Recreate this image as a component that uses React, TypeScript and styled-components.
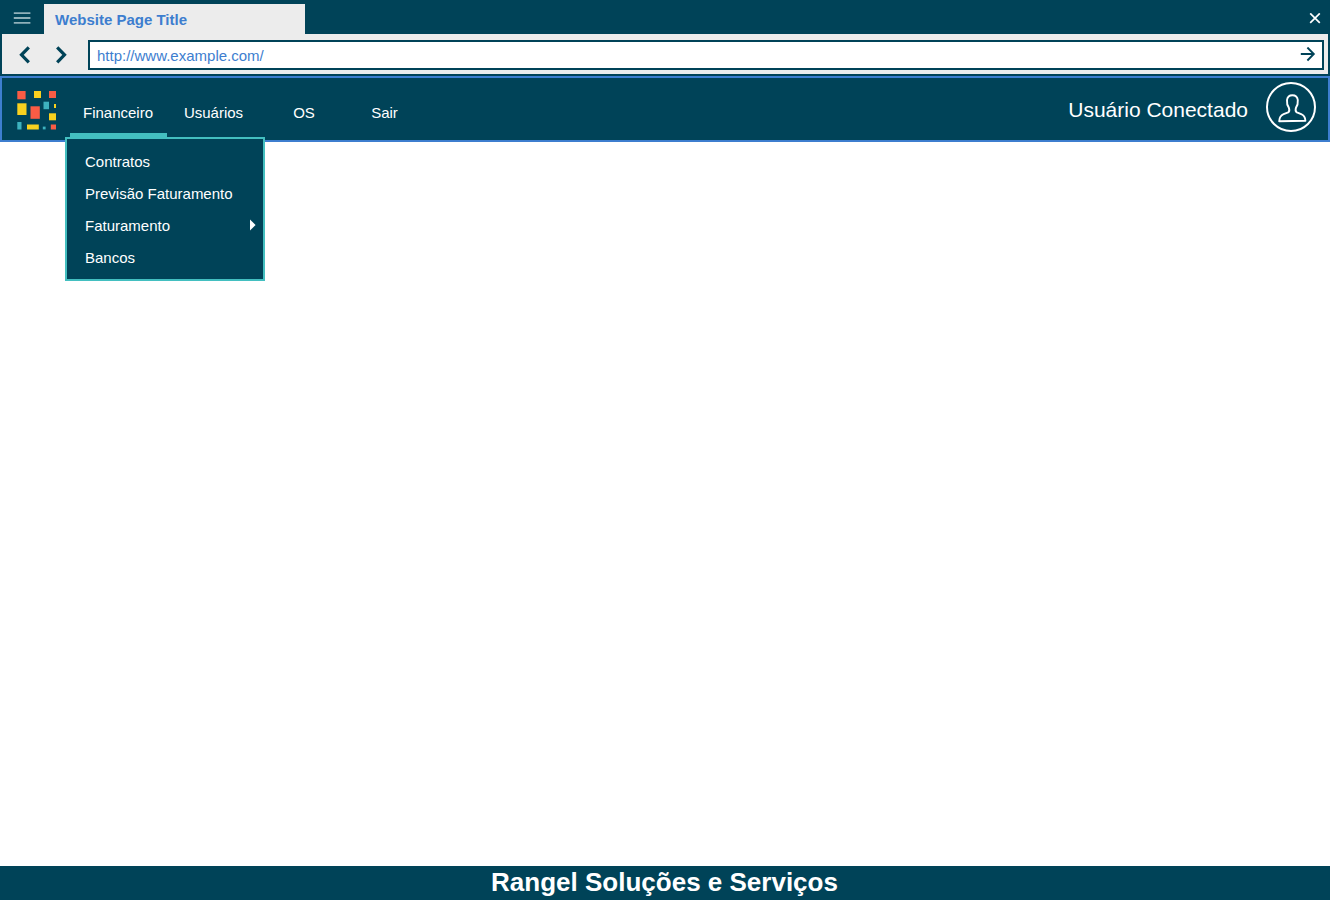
import React from "react";
import styled, { createGlobalStyle } from "styled-components";

const navy = "#004358";
const teal = "#43bfc0";
const blue = "#3d7ecf";
const chrome = "#ececec";

const GlobalStyle = createGlobalStyle`
  * { box-sizing: border-box; }
  body {
    margin: 0;
    background: #fff;
    font-family: "Liberation Sans", Arial, sans-serif;
    font-size: 15px;
  }
  button, input { font: inherit; }
`;

const Page = styled.div`
  display: flex;
  flex-direction: column;
  min-height: 100vh;
`;

const Browser = styled.div`
  background: ${navy};
  padding: 4px 2px 2px;
`;

const TabBar = styled.div`
  display: flex;
  align-items: stretch;
  height: 30px;
`;

const IconButton = styled.button<{ $width: number }>`
  display: flex;
  align-items: center;
  justify-content: center;
  flex: none;
  width: ${(p) => p.$width}px;
  padding: 0;
  border: 0;
  background: none;
  cursor: pointer;
`;

const BrowserTab = styled.div`
  width: 261px;
  margin-left: 2px;
  padding-left: 11px;
  background: ${chrome};
  color: ${blue};
  font-weight: bold;
  line-height: 32px;
`;

const Spacer = styled.div`
  flex: 1;
`;

const Toolbar = styled.div`
  display: flex;
  align-items: stretch;
  height: 40px;
  padding: 6px 4px 4px 5px;
  background: ${chrome};
`;

const AddressBox = styled.form`
  display: flex;
  flex: 1;
  min-width: 0;
  margin-left: 9px;
  border: 2px solid ${navy};
  background: #fff;
`;

const AddressInput = styled.input`
  flex: 1;
  min-width: 0;
  padding: 0 7px;
  border: 0;
  outline: 0;
  background: none;
  color: ${blue};
`;

const Header = styled.header`
  display: flex;
  align-items: flex-start;
  justify-content: space-between;
  height: 66px;
  padding-right: 12px;
  border: 2px solid ${blue};
  background: ${navy};
  color: #fff;
`;

const Brand = styled.div`
  display: flex;
`;

const LogoLink = styled.a`
  display: block;
  width: 68px;
  padding: 11px 0 0 13px;
`;

const Nav = styled.nav`
  display: flex;
`;

const NavItem = styled.div<{ $width: number }>`
  position: relative;
  width: ${(p) => p.$width}px;
`;

const NavButton = styled.button<{ $active?: boolean }>`
  width: 100%;
  height: 59px;
  padding: 14px 1px 0 0;
  border: 0;
  border-bottom: 4px solid ${(p) => (p.$active ? teal : "transparent")};
  background: none;
  color: #fff;
  text-align: center;
  cursor: pointer;
`;

const Menu = styled.ul`
  position: absolute;
  top: 100%;
  left: -5px;
  z-index: 1;
  width: 200px;
  margin: 0;
  padding: 6px 0;
  border: 2px solid ${teal};
  background: ${navy};
  list-style: none;
`;

const MenuLink = styled.a`
  display: flex;
  align-items: center;
  justify-content: space-between;
  height: 32px;
  padding: 0 7px 0 18px;
  color: #fff;
  text-decoration: none;
`;

const Account = styled.div`
  display: flex;
  align-items: center;
  gap: 18px;
  padding-top: 4px;
`;

const UserName = styled.span`
  padding-top: 6px;
  font-size: 21px;
  line-height: 24px;
`;

const AvatarButton = styled(IconButton)`
  height: 50px;
`;

const Main = styled.main`
  flex: 1;
`;

const Footer = styled.footer`
  padding: 0 1px 2px 0;
  background: ${navy};
  color: #fff;
  font-size: 26px;
  font-weight: bold;
  line-height: 32px;
  text-align: center;
`;

const red = "#f95c45";
const yellow = "#f8d11f";
const aqua = "#3db2bf";

const tiles: [number, number, number, number, string][] = [
  [2.3, 2, 8.3, 8.3, red],
  [19, 2, 7, 7, yellow],
  [34, 2, 7, 7, red],
  [2.3, 14.3, 9.2, 11.7, yellow],
  [15.5, 17.3, 9.3, 12.5, red],
  [28.5, 12.7, 5.5, 7.5, aqua],
  [39, 15, 2, 4, yellow],
  [34, 24.3, 7, 7, yellow],
  [2.3, 33, 4.2, 7.5, aqua],
  [12, 35.5, 11.8, 5, yellow],
  [27.8, 37.6, 2.8, 2.8, aqua],
  [35.8, 35.5, 5.2, 5, red],
];

const Logo = () => (
  <svg width="44" height="44" viewBox="0 0 44 44" aria-hidden="true">
    {tiles.map(([x, y, w, h, fill]) => (
      <rect key={`${x}-${y}`} x={x} y={y} width={w} height={h} fill={fill} />
    ))}
  </svg>
);

const Chevron = ({ d }: { d: string }) => (
  <svg width="20" height="22" viewBox="0 0 20 22" fill="none" stroke={navy} strokeWidth="3.2" aria-hidden="true">
    <path d={d} />
  </svg>
);

const navItems = [
  { label: "Financeiro", width: 97 },
  { label: "Usuários", width: 94 },
  { label: "OS", width: 87 },
  { label: "Sair", width: 74 },
];

const menuItems = [
  { label: "Contratos" },
  { label: "Previsão Faturamento" },
  { label: "Faturamento", submenu: true },
  { label: "Bancos" },
];

export default function App() {
  return (
    <Page>
      <GlobalStyle />
      <Browser>
        <TabBar>
          <IconButton $width={40} type="button" aria-label="Menu">
            <svg width="18" height="14" viewBox="0 0 18 14" stroke="#8fb0b9" strokeWidth="1.8" aria-hidden="true">
              <path d="M.8 1.2h16.6M.8 6h16.6M.8 10.8h16.6" />
            </svg>
          </IconButton>
          <BrowserTab>Website Page Title</BrowserTab>
          <Spacer />
          <IconButton $width={26} type="button" aria-label="Fechar">
            <svg width="12" height="12" viewBox="0 0 12 12" stroke="#fff" strokeWidth="1.7" aria-hidden="true">
              <path d="M1.2 .4 10.8 9.8M10.8 .4 1.2 9.8" />
            </svg>
          </IconButton>
        </TabBar>
        <Toolbar>
          <IconButton $width={36} type="button" aria-label="Voltar">
            <Chevron d="M13.8 3.3 6.5 10.8l7.3 7.5" />
          </IconButton>
          <IconButton $width={36} type="button" aria-label="Avançar">
            <Chevron d="m6.2 3.3 7.3 7.5-7.3 7.5" />
          </IconButton>
          <AddressBox onSubmit={(e) => e.preventDefault()}>
            <AddressInput aria-label="Endereço" defaultValue="http://www.example.com/" />
            <IconButton $width={28} type="submit" aria-label="Ir">
              <svg width="16" height="16" viewBox="0 0 16 16" fill="none" stroke={navy} strokeWidth="1.9" aria-hidden="true">
                <path d="M.8 7h12.8M7.4.5 13.8 7l-6.4 6.5" />
              </svg>
            </IconButton>
          </AddressBox>
        </Toolbar>
      </Browser>

      <Header>
        <Brand>
          <LogoLink href="#" aria-label="Início">
            <Logo />
          </LogoLink>
          <Nav>
            {navItems.map(({ label, width }, i) => (
              <NavItem key={label} $width={width}>
                <NavButton type="button" $active={i === 0}>
                  {label}
                </NavButton>
                {i === 0 && (
                  <Menu>
                    {menuItems.map((item) => (
                      <li key={item.label}>
                        <MenuLink href="#">
                          {item.label}
                          {item.submenu && (
                            <svg width="6" height="12" viewBox="0 0 6 12" fill="#fff" aria-hidden="true">
                              <path d="M0 .5 5.6 6 0 11.5z" />
                            </svg>
                          )}
                        </MenuLink>
                      </li>
                    ))}
                  </Menu>
                )}
              </NavItem>
            ))}
          </Nav>
        </Brand>
        <Account>
          <UserName>Usuário Conectado</UserName>
          <AvatarButton $width={50} type="button" aria-label="Perfil">
            <svg width="50" height="50" viewBox="0 0 50 50" fill="none" stroke="#fff" aria-hidden="true">
              <circle cx="25" cy="25" r="24" strokeWidth="2" />
              <path
                strokeWidth="1.9"
                strokeLinejoin="round"
                d="M13.2 39.2C13.4 35.4 14.6 33.4 17.6 32.2L22.2 30.4C23.8 29.4 23.4 27.2 22.8 25.6C21.2 23.4 20.8 20.4 21 18C21.4 14.8 23.4 13.2 26.4 13.2C29.4 13.2 31.4 14.8 31.8 18C32 20.4 31.6 23.4 30 25.6C29.4 27.4 29 29.4 30.8 30.4L35.2 32.2C38.2 33.4 39.2 35.4 39.4 38.8Z"
              />
            </svg>
          </AvatarButton>
        </Account>
      </Header>
      <Main />
      <Footer>Rangel Soluções e Serviços</Footer>
    </Page>
  );
}
